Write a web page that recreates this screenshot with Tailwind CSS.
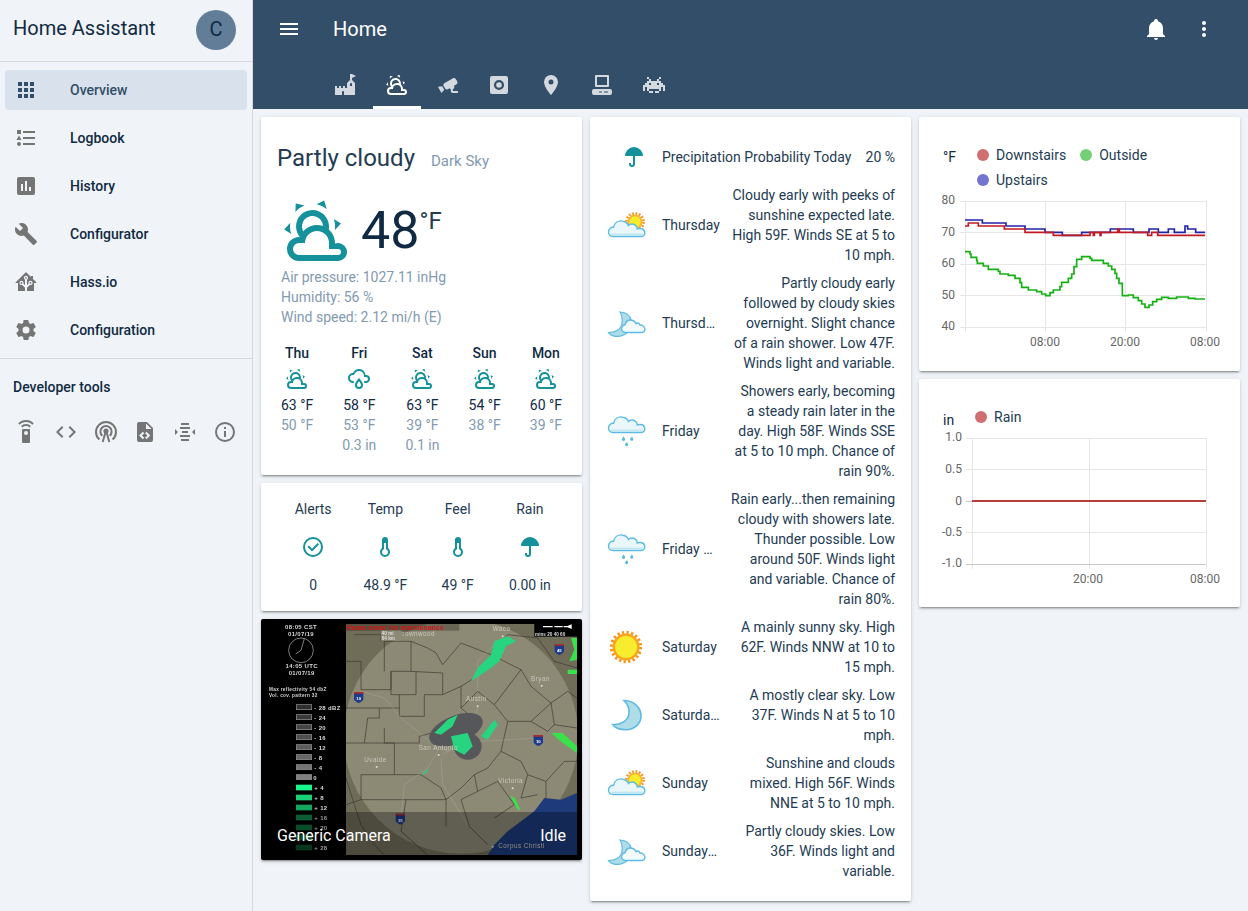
<!DOCTYPE html>
<html lang="en">
<head>
<meta charset="utf-8" />
<title>Home Assistant</title>
<script src="https://cdn.jsdelivr.net/npm/@tailwindcss/browser@4"></script>
</head>
<body class="h-screen overflow-hidden bg-[#f0f4f8] text-[#102a43] text-sm [font-family:Roboto,sans-serif]">

<!-- shared icons -->
<svg class="absolute w-0 h-0">
  <defs>
    <symbol id="partly" viewBox="0 0 24 24"><path d="M12.74,5.47C15.1,6.5 16.35,9.03 15.92,11.46C17.19,12.56 18,14.19 18,16V16.17C18.31,16.06 18.65,16 19,16A3,3 0 0,1 22,19A3,3 0 0,1 19,22H6A4,4 0 0,1 2,18A4,4 0 0,1 6,14H6.27C5,12.45 4.6,10.24 5.5,8.26C6.72,5.5 9.97,4.24 12.74,5.47M11.93,7.3C10.16,6.5 8.09,7.31 7.31,9.07C6.85,10.09 6.93,11.25 7.41,12.17C8.5,10.83 10.16,10 12,10C12.7,10 13.38,10.12 14,10.34C13.94,9.06 13.18,7.86 11.93,7.3M13.55,3.64C13,3.4 12.45,3.23 11.88,3.12L14.37,1.82L15.27,4.71C14.76,4.29 14.19,3.93 13.55,3.64M6.09,4.44C5.6,4.79 5.17,5.19 4.8,5.63L4.91,2.82L7.87,3.5C7.25,3.71 6.65,4.03 6.09,4.44M18,9.71C17.91,9.12 17.78,8.55 17.59,8L19.97,9.5L17.92,11.73C18.03,11.08 18.05,10.4 18,9.71M3.04,11.3C3.11,11.9 3.24,12.47 3.43,13L1.06,11.5L3.1,9.28C3,9.93 2.97,10.61 3.04,11.3M19,18H16V16A4,4 0 0,0 12,12A4,4 0 0,0 8,16H6A2,2 0 0,0 4,18A2,2 0 0,0 6,20H19A1,1 0 0,0 20,19A1,1 0 0,0 19,18Z"/></symbol>
    <symbol id="thermo" viewBox="0 0 24 24"><path d="M17,17A5,5 0 0,1 12,22A5,5 0 0,1 7,17C7,15.36 7.79,13.91 9,13V5A3,3 0 0,1 12,2A3,3 0 0,1 15,5V13C16.21,13.91 17,15.36 17,17M11,8V14.17C9.83,14.58 9,15.69 9,17A3,3 0 0,0 12,20A3,3 0 0,0 15,17C15,15.69 14.17,14.58 13,14.17V8H11Z"/></symbol>
    <symbol id="umbrella" viewBox="0 0 24 24"><path d="M12,2A9,9 0 0,1 21,11H13V19A3,3 0 0,1 10,22A3,3 0 0,1 7,19V18H9V19A1,1 0 0,0 10,20A1,1 0 0,0 11,19V11H3A9,9 0 0,1 12,2Z"/></symbol>
    <symbol id="cloud-shape" viewBox="0 0 40 40"><path d="M7 31.5C3.5 31.5 2.5 28.7 2.5 27C2.5 24 5 22 7.5 22.3C8.5 18 12 15.5 16 16C19 16.3 21.5 18 22.5 20.5C24.5 18.5 28 18.5 30 20.8C31 22 31.3 23 31.3 24C32 23.5 33 23.5 34 23.5C37 23.5 38.8 25.5 38.8 28C38.8 30 37 31.5 35 31.5Z" fill="#eaf7fa" stroke="#5cbae3" stroke-width="1.4"/><path d="M5 29.6H36.5" stroke="#bfe6f1" stroke-width="2"/></symbol>
    <symbol id="w-sun-cloud" viewBox="0 0 40 40">
      <circle cx="29" cy="17" r="8.6" fill="none" stroke="#f7931e" stroke-width="2.6" stroke-dasharray="1.7 1.7"/>
      <circle cx="29" cy="17" r="7.6" fill="#f9b233"/>
      <circle cx="29" cy="17" r="5.8" fill="#f7ec2d"/>
      <use href="#cloud-shape" width="40" height="40"/>
    </symbol>
    <symbol id="w-moon-cloud" viewBox="0 0 40 40">
      <path d="M14 9C20 9.5 24 12.5 25 17L17 24L22 28.5C20 31.5 15 34 9.5 33.3C6.5 33 3.5 31.3 2.5 29.5C9 29.8 15 26.5 16 20.5C16.6 15.5 16 12 14 9Z" fill="#aedde8" stroke="#5cbae3" stroke-width="1.2"/>
      <path d="M20 29.5C16.5 29.5 15.5 26.8 15.5 25.5C15.5 23 17.5 21.7 19 21.8C20 18.5 22.5 16.8 25 17C27.5 17.2 29.2 18.6 30 20.6C31.5 19.5 33.5 20 34 22C36.5 22 38.8 23.8 38.8 26.2C38.8 28 37.3 29.5 35.3 29.5Z" fill="#f4fbfc" stroke="#5cbae3" stroke-width="1.4"/>
    </symbol>
    <symbol id="w-rain" viewBox="0 0 40 40">
      <use href="#cloud-shape" width="40" height="40" y="-10"/>
      <path d="M17.5 25.5L19 27.5A1.7 1.7 0 1 1 16 27.5Z M26 25.5L27.2 27.7A1.6 1.6 0 1 1 24.3 27.5Z M21 31L22 33A1.6 1.6 0 1 1 19.2 33Z" fill="#5cbae3"/>
    </symbol>
    <symbol id="w-sun" viewBox="0 0 40 40">
      <circle cx="20" cy="20" r="14.6" fill="none" stroke="#f7931e" stroke-width="3.2" stroke-dasharray="2.3 2.29"/>
      <circle cx="20" cy="20" r="13.5" fill="#f9a61e"/>
      <circle cx="20" cy="20" r="11" fill="#f7ec2d"/>
    </symbol>
    <symbol id="w-moon" viewBox="0 0 40 40">
      <path d="M18 5.5C27 5.5 35 12 35 21C35 29 28 34.8 20 34.8C14 34.8 9 33 6.8 29.5C14 30 22 26 23 19C24 13 21 8.5 18 5.5Z" fill="#aedde8" stroke="#5cbae3" stroke-width="1.6"/>
    </symbol>
  </defs>
</svg>

<div class="flex h-full">
  <!-- sidebar -->
  <aside class="w-[253px] shrink-0 border-r border-[#d5d9de] flex flex-col">
    <div class="h-[62px] pl-[13px] pr-4 border-b border-[#d5d9de] flex items-center justify-between pb-[4px]">
      <span class="text-[20px]">Home Assistant</span>
      <span class="w-10 h-10 rounded-full bg-[#627d98] flex items-center justify-center text-[20px] mt-[2px]">C</span>
    </div>
    <nav class="pt-2 pb-2 flex flex-col gap-2 border-b border-[#d5d9de] font-medium">
      <a class="mx-[5px] h-10 rounded bg-[#d9e2ec] flex items-center pl-[9px] gap-8 text-[#334e68]">
        <svg class="w-6 h-6 fill-[#334e68]" viewBox="0 0 24 24"><path d="M16,20H20V16H16M16,14H20V10H16M10,8H14V4H10M16,8H20V4H16M10,14H14V10H10M4,14H8V10H4M4,20H8V16H4M10,20H14V16H10M4,8H8V4H4V8Z"/></svg>
        Overview
      </a>
      <a class="mx-[5px] h-10 flex items-center pl-[9px] gap-8">
        <svg class="w-6 h-6 fill-[#757575]" viewBox="0 0 24 24"><path d="M5,9.5L7.5,14H2.5L5,9.5M3,4H7V8H3V4M5,20A2,2 0 0,0 7,18A2,2 0 0,0 5,16A2,2 0 0,0 3,18A2,2 0 0,0 5,20M9,5V7H21V5H9M9,19H21V17H9V19M9,13H21V11H9V13Z"/></svg>
        Logbook
      </a>
      <a class="mx-[5px] h-10 flex items-center pl-[9px] gap-8">
        <svg class="w-6 h-6 fill-[#757575]" viewBox="0 0 24 24"><path d="M17,17H15V13H17M13,17H11V7H13M9,17H7V10H9M19,3H5C3.89,3 3,3.89 3,5V19A2,2 0 0,0 5,21H19A2,2 0 0,0 21,19V5C21,3.89 20.1,3 19,3Z"/></svg>
        History
      </a>
      <a class="mx-[5px] h-10 flex items-center pl-[9px] gap-8">
        <svg class="w-6 h-6 fill-[#757575]" viewBox="0 0 24 24"><path d="M22.7,19L13.6,9.9C14.5,7.6 14,4.9 12.1,3C10.1,1 7.1,0.6 4.7,1.7L9,6L6,9L1.6,4.7C0.4,7.1 0.9,10.1 2.9,12.1C4.8,14 7.5,14.5 9.8,13.6L18.9,22.7C19.3,23.1 19.9,23.1 20.3,22.7L22.6,20.4C23.1,20 23.1,19.3 22.7,19Z"/></svg>
        Configurator
      </a>
      <a class="mx-[5px] h-10 flex items-center pl-[9px] gap-8">
        <svg class="w-6 h-6 fill-[#757575]" viewBox="0 0 24 24"><path d="M21.8,13H20V21H13V17.67L15.79,14.88L16.5,15C17.66,15 18.6,14.06 18.6,12.9C18.6,11.74 17.66,10.8 16.5,10.8A2.1,2.1 0 0,0 14.4,12.9L14.5,13.61L13,15.13V9.65C13.66,9.29 14.1,8.6 14.1,7.8A2.1,2.1 0 0,0 12,5.7A2.1,2.1 0 0,0 9.9,7.8C9.9,8.6 10.34,9.29 11,9.65V15.13L9.5,13.61L9.6,12.9A2.1,2.1 0 0,0 7.5,10.8A2.1,2.1 0 0,0 5.4,12.9A2.1,2.1 0 0,0 7.5,15L8.21,14.88L11,17.67V21H4V13H2.25C1.83,13 1.42,13 1.42,12.79C1.43,12.57 1.85,12.15 2.28,11.72L11,3C11.33,2.67 11.67,2.33 12,2.33C12.33,2.33 12.67,2.67 13,3L17,7V6H19V9L21.78,11.78C22.18,12.18 22.59,12.59 22.6,12.8C22.6,13 22.2,13 21.8,13M7.5,12A0.9,0.9 0 0,1 8.4,12.9A0.9,0.9 0 0,1 7.5,13.8A0.9,0.9 0 0,1 6.6,12.9A0.9,0.9 0 0,1 7.5,12M16.5,12C17,12 17.4,12.4 17.4,12.9C17.4,13.4 17,13.8 16.5,13.8A0.9,0.9 0 0,1 15.6,12.9A0.9,0.9 0 0,1 16.5,12M12,6.9C12.5,6.9 12.9,7.3 12.9,7.8C12.9,8.3 12.5,8.7 12,8.7C11.5,8.7 11.1,8.3 11.1,7.8C11.1,7.3 11.5,6.9 12,6.9Z"/></svg>
        Hass.io
      </a>
      <a class="mx-[5px] h-10 flex items-center pl-[9px] gap-8">
        <svg class="w-6 h-6 fill-[#757575]" viewBox="0 0 24 24"><path d="M12,15.5A3.5,3.5 0 0,1 8.5,12A3.5,3.5 0 0,1 12,8.5A3.5,3.5 0 0,1 15.5,12A3.5,3.5 0 0,1 12,15.5M19.43,12.97C19.47,12.65 19.5,12.33 19.5,12C19.5,11.67 19.47,11.34 19.43,11L21.54,9.37C21.73,9.22 21.78,8.95 21.66,8.73L19.66,5.27C19.54,5.05 19.27,4.96 19.05,5.05L16.56,6.05C16.04,5.66 15.5,5.32 14.87,5.07L14.5,2.42C14.46,2.18 14.25,2 14,2H10C9.75,2 9.54,2.18 9.5,2.42L9.13,5.07C8.5,5.32 7.96,5.66 7.44,6.05L4.95,5.05C4.73,4.96 4.46,5.05 4.34,5.27L2.34,8.73C2.21,8.95 2.27,9.22 2.46,9.37L4.57,11C4.53,11.34 4.5,11.67 4.5,12C4.5,12.33 4.53,12.65 4.57,12.97L2.46,14.63C2.27,14.78 2.21,15.05 2.34,15.27L4.34,18.73C4.46,18.95 4.73,19.03 4.95,18.95L7.44,17.94C7.96,18.34 8.5,18.68 9.13,18.93L9.5,21.58C9.54,21.82 9.75,22 10,22H14C14.25,22 14.46,21.82 14.5,21.58L14.87,18.93C15.5,18.67 16.04,18.34 16.56,17.94L19.05,18.95C19.27,19.03 19.54,18.95 19.66,18.73L21.66,15.27C21.78,15.05 21.73,14.78 21.54,14.63L19.43,12.97Z"/></svg>
        Configuration
      </a>
    </nav>
    <div class="pl-[13px] pt-[18px] font-medium leading-5">Developer tools</div>
    <div class="pl-[14px] mt-[23px] flex gap-[15.8px]">
      <svg class="w-6 h-6 fill-[#757575]" viewBox="0 0 24 24"><path d="M12,0C8.96,0 6.21,1.23 4.22,3.22L5.63,4.63C7.26,3 9.5,2 12,2C14.5,2 16.74,3 18.36,4.64L19.77,3.23C17.79,1.23 15.04,0 12,0M7.05,6.05L8.46,7.46C9.37,6.56 10.62,6 12,6C13.38,6 14.63,6.56 15.54,7.46L16.95,6.05C15.68,4.78 13.93,4 12,4C10.07,4 8.32,4.78 7.05,6.05M12,15A2,2 0 0,1 10,13A2,2 0 0,1 12,11A2,2 0 0,1 14,13A2,2 0 0,1 12,15M15,9H9A1,1 0 0,0 8,10V22A1,1 0 0,0 9,23H15A1,1 0 0,0 16,22V10A1,1 0 0,0 15,9Z"/></svg>
      <svg class="w-6 h-6 fill-[#757575]" viewBox="0 0 24 24"><path d="M14.6,16.6L19.2,12L14.6,7.4L16,6L22,12L16,18L14.6,16.6M9.4,16.6L4.8,12L9.4,7.4L8,6L2,12L8,18L9.4,16.6Z"/></svg>
      <svg class="w-6 h-6 fill-none stroke-[#757575] stroke-2" viewBox="0 0 24 24"><path d="M5.4,19.5A10,10 0 1 1 18.6,19.5"/><path d="M8.3,15.8A5.6,5.6 0 1 1 15.7,15.8"/><circle cx="12" cy="11" r="1.6" class="fill-[#757575]"/><path d="M11.5,12L8.7,22M12.5,12L15.3,22"/></svg>
      <svg class="w-6 h-6 fill-[#757575]" viewBox="0 0 24 24"><path d="M13,9H18.5L13,3.5V9M6,2H14L20,8V20A2,2 0 0,1 18,22H6C4.89,22 4,21.1 4,20V4C4,2.89 4.89,2 6,2M6.12,15.5L9.86,19.24L11.28,17.83L8.95,15.5L11.28,13.17L9.86,11.76L6.12,15.5M17.28,15.5L13.54,11.76L12.12,13.17L14.45,15.5L12.12,17.83L13.54,19.24L17.28,15.5Z"/></svg>
      <svg class="w-6 h-6 fill-[#757575]" viewBox="0 0 24 24"><path d="M8,3H16V5H8ZM7,7H17V9H7ZM9,11H15V13H9ZM7,15H17V17H7ZM8,19H16V21H8ZM2,9V15L5,12ZM22,9V15L19,12Z"/></svg>
      <svg class="w-6 h-6 fill-[#757575]" viewBox="0 0 24 24"><path d="M11,9H13V7H11M12,20C7.59,20 4,16.41 4,12C4,7.59 7.59,4 12,4C16.41,4 20,7.59 20,12C20,16.41 16.41,20 12,20M12,2A10,10 0 0,0 2,12A10,10 0 0,0 12,22A10,10 0 0,0 22,12A10,10 0 0,0 12,2M11,17H13V11H11V17Z"/></svg>
    </div>
  </aside>

  <main class="flex-1 min-w-0">
    <!-- toolbar -->
    <header class="h-[109px] bg-[#334e68] text-white">
      <div class="h-[58px] flex items-center pl-[24px] pr-[32px]">
        <svg class="w-6 h-6 fill-white" viewBox="0 0 24 24"><path d="M3,6H21V8H3V6M3,11H21V13H3V11M3,16H21V18H3V16Z"/></svg>
        <span class="ml-[32px] text-[20px] flex-1">Home</span>
        <svg class="w-6 h-6 fill-white" viewBox="0 0 24 24"><path d="M21,19V20H3V19L5,17V11C5,7.9 7.03,5.17 10,4.29C10,4.19 10,4.1 10,4A2,2 0 0,1 12,2A2,2 0 0,1 14,4C14,4.1 14,4.19 14,4.29C16.97,5.17 19,7.9 19,11V17L21,19M14,21A2,2 0 0,1 12,23A2,2 0 0,1 10,21"/></svg>
        <svg class="w-6 h-6 fill-white ml-6" viewBox="0 0 24 24"><path d="M12,16A2,2 0 0,1 14,18A2,2 0 0,1 12,20A2,2 0 0,1 10,18A2,2 0 0,1 12,16M12,10A2,2 0 0,1 14,12A2,2 0 0,1 12,14A2,2 0 0,1 10,12A2,2 0 0,1 12,10M12,4A2,2 0 0,1 14,6A2,2 0 0,1 12,8A2,2 0 0,1 10,6A2,2 0 0,1 12,4Z"/></svg>
      </div>
      <div class="flex pl-[66.5px] fill-[#d3d9df]">
        <div class="w-[51.4px] pt-[15px] flex justify-center"><svg class="w-6 h-6" viewBox="0 0 24 24"><path d="M2,13H4V15H6V13H8V15H10V13H12V15H14V10L17,7V1H19L23,3L19,5V7L22,10V22H11V19A1,1 0 0,0 10,18A1,1 0 0,0 9,19V22H2V13M18,10C17.45,10 17,10.54 17,11.2V13H19V11.2C19,10.54 18.55,10 18,10Z"/></svg></div>
        <div class="w-[51.4px] pt-[15px] flex flex-col items-center fill-white">
          <svg class="w-6 h-6"><use href="#partly"/></svg>
          <div class="w-12 h-[3px] bg-white mt-[9px]"></div>
        </div>
        <div class="w-[51.4px] pt-[15px] flex justify-center"><svg class="w-6 h-6" viewBox="0 0 24 24"><path d="M18.15,4.94C17.77,4.91 17.37,5 17,5.2L8.35,10.2C7.39,10.76 7.07,12 7.62,12.94L9.12,15.53C9.67,16.5 10.89,16.82 11.85,16.27L13.65,15.23C13.92,15.69 14.32,16.06 14.81,16.27V18.04C14.81,19.13 15.7,20 16.81,20H22V18.04H16.81V16.27C17.72,15.87 18.31,14.97 18.31,14C18.31,13.54 18.19,13.11 17.97,12.73L20.5,11.27C21.47,10.71 21.8,9.5 21.24,8.53L19.74,5.94C19.4,5.34 18.79,5 18.15,4.94M6.22,13.17L2,13.87L2.75,15.17L4.75,18.63L5.5,19.93L8.22,16.63L6.22,13.17Z"/></svg></div>
        <div class="w-[51.4px] pt-[15px] flex justify-center"><svg class="w-6 h-6" viewBox="0 0 24 24"><path fill-rule="evenodd" d="M5,3H19A2,2 0 0,1 21,5V19A2,2 0 0,1 19,21H5A2,2 0 0,1 3,19V5A2,2 0 0,1 5,3ZM12,7A5,5 0 1,0 12,17A5,5 0 1,0 12,7ZM12,9.2A2.8,2.8 0 1,1 12,14.8A2.8,2.8 0 1,1 12,9.2Z"/></svg></div>
        <div class="w-[51.4px] pt-[15px] flex justify-center"><svg class="w-6 h-6" viewBox="0 0 24 24"><path d="M12,11.5A2.5,2.5 0 0,1 9.5,9A2.5,2.5 0 0,1 12,6.5A2.5,2.5 0 0,1 14.5,9A2.5,2.5 0 0,1 12,11.5M12,2A7,7 0 0,0 5,9C5,14.25 12,22 12,22C12,22 19,14.25 19,9A7,7 0 0,0 12,2Z"/></svg></div>
        <div class="w-[51.4px] pt-[15px] flex justify-center"><svg class="w-6 h-6" viewBox="0 0 24 24"><path fill-rule="evenodd" d="M6,2H18A1,1 0 0,1 19,3V13A1,1 0 0,1 18,14H6A1,1 0 0,1 5,13V3A1,1 0 0,1 6,2ZM7,4V12H17V4ZM4,16H20A2,2 0 0,1 22,18V20A2,2 0 0,1 20,22H4A2,2 0 0,1 2,20V18A2,2 0 0,1 4,16ZM9,18.5V19.5H12V18.5ZM14,18.5V19.5H18V18.5Z"/></svg></div>
        <div class="w-[51.4px] pt-[15px] flex justify-center"><svg class="w-6 h-6" viewBox="0 0 24 24"><path d="M7,6H5V4H7V6M17,6H19V4H17V6M23,12V18H21V14H19V18H17V16H7V18H5V14H3V18H1V12H3V10H5V8H7V6H9V8H15V6H17V8H19V10H21V12H23M15,10V12H17V10H15M7,12H9V10H7V12M11,18H7V20H11V18M17,18H13V20H17V18Z"/></svg></div>
      </div>
    </header>

    <div class="flex gap-2 p-2 items-start">
      <!-- column 1 -->
      <div class="w-[321px] flex flex-col gap-2">
        <section class="bg-white rounded-[2px] shadow-[0_2px_2px_0_rgba(0,0,0,.14),0_1px_5px_0_rgba(0,0,0,.12),0_3px_1px_-2px_rgba(0,0,0,.2)] pt-[25px] pb-5">
          <div class="pl-4 flex items-baseline leading-8">
            <span class="text-2xl text-[#243b53]">Partly cloudy</span>
            <span class="ml-4 text-[15px] text-[#829ab1]">Dark Sky</span>
          </div>
          <div class="mt-[18px] pl-5 flex h-[72px] items-center">
            <svg class="w-[72px] h-[72px] fill-[#14919b]"><use href="#partly"/></svg>
            <span class="ml-2 text-[52px] leading-none">48</span>
            <span class="self-start mt-[10px] text-2xl leading-8 text-[#243b53]">°F</span>
          </div>
          <div class="pl-5 leading-5 text-[#829ab1]">
            <div>Air pressure: 1027.11 inHg</div>
            <div>Humidity: 56 %</div>
            <div>Wind speed: 2.12 mi/h (E)</div>
          </div>
          <div class="mt-4 px-5 flex justify-between text-center leading-5">
            <div>
              <div class="font-medium">Thu</div>
              <svg class="w-6 h-6 my-1 mx-auto fill-[#14919b]"><use href="#partly"/></svg>
              <div>63 °F</div>
              <div class="text-[#829ab1]">50 °F</div>
            </div>
            <div>
              <div class="font-medium">Fri</div>
              <svg class="w-6 h-6 my-1 mx-auto fill-[#14919b]" viewBox="0 0 24 24"><path d="M6,14.03A1,1 0 0,1 7,15.03C7,15.58 6.55,16.03 6,16.03C3.24,16.03 1,13.79 1,11.03C1,8.27 3.24,6.03 6,6.03C7,3.68 9.3,2.03 12,2.03C15.43,2.03 18.24,4.69 18.5,8.06L19,8.03A4,4 0 0,1 23,12.03C23,14.24 21.21,16.03 19,16.03H18C17.45,16.03 17,15.58 17,15.03C17,14.47 17.45,14.03 18,14.03H19A2,2 0 0,0 21,12.03A2,2 0 0,0 19,10.03H17V9.03C17,6.27 14.76,4.03 12,4.03C9.5,4.03 7.45,5.84 7.06,8.21C6.73,8.09 6.37,8.03 6,8.03A3,3 0 0,0 3,11.03A3,3 0 0,0 6,14.03M12,14.15C12.18,14.39 12.37,14.66 12.56,14.94C13,15.56 14,17.03 14,18C14,19.11 13.1,20 12,20A2,2 0 0,1 10,18C10,17.03 11,15.56 11.44,14.94C11.63,14.66 11.82,14.4 12,14.15M12,11.03L11.5,11.59C11.5,11.59 10.65,12.55 9.79,13.81C8.93,15.06 8,16.56 8,18A4,4 0 0,0 12,22A4,4 0 0,0 16,18C16,16.56 15.07,15.06 14.21,13.81C13.35,12.55 12.5,11.59 12.5,11.59L12,11.03Z"/></svg>
              <div>58 °F</div>
              <div class="text-[#829ab1]">53 °F</div>
              <div class="text-[#829ab1]">0.3 in</div>
            </div>
            <div>
              <div class="font-medium">Sat</div>
              <svg class="w-6 h-6 my-1 mx-auto fill-[#14919b]"><use href="#partly"/></svg>
              <div>63 °F</div>
              <div class="text-[#829ab1]">39 °F</div>
              <div class="text-[#829ab1]">0.1 in</div>
            </div>
            <div>
              <div class="font-medium">Sun</div>
              <svg class="w-6 h-6 my-1 mx-auto fill-[#14919b]"><use href="#partly"/></svg>
              <div>54 °F</div>
              <div class="text-[#829ab1]">38 °F</div>
            </div>
            <div>
              <div class="font-medium">Mon</div>
              <svg class="w-6 h-6 my-1 mx-auto fill-[#14919b]"><use href="#partly"/></svg>
              <div>60 °F</div>
              <div class="text-[#829ab1]">39 °F</div>
            </div>
          </div>
        </section>

        <section class="bg-white rounded-[2px] shadow-[0_2px_2px_0_rgba(0,0,0,.14),0_1px_5px_0_rgba(0,0,0,.12),0_3px_1px_-2px_rgba(0,0,0,.2)] px-4 py-4 grid grid-cols-4 text-center leading-5 text-[#243b53]">
          <div>
            <div>Alerts</div>
            <svg class="w-6 h-6 my-4 mx-auto fill-[#14919b]" viewBox="0 0 24 24"><path d="M12,2A10,10 0 0,1 22,12A10,10 0 0,1 12,22A10,10 0 0,1 2,12A10,10 0 0,1 12,2M12,4A8,8 0 0,0 4,12A8,8 0 0,0 12,20A8,8 0 0,0 20,12A8,8 0 0,0 12,4M11,16.5L6.5,12L7.91,10.59L11,13.67L16.59,8.09L18,9.5L11,16.5Z"/></svg>
            <div>0</div>
          </div>
          <div>
            <div>Temp</div>
            <svg class="w-6 h-6 my-4 mx-auto fill-[#14919b]"><use href="#thermo"/></svg>
            <div>48.9 °F</div>
          </div>
          <div>
            <div>Feel</div>
            <svg class="w-6 h-6 my-4 mx-auto fill-[#14919b]"><use href="#thermo"/></svg>
            <div>49 °F</div>
          </div>
          <div>
            <div>Rain</div>
            <svg class="w-6 h-6 my-4 mx-auto fill-[#14919b]"><use href="#umbrella"/></svg>
            <div>0.00 in</div>
          </div>
        </section>

        <!-- radar camera -->
        <section class="relative h-[241px] bg-black rounded-[2px] overflow-hidden shadow-[0_2px_2px_0_rgba(0,0,0,.14),0_1px_5px_0_rgba(0,0,0,.12),0_3px_1px_-2px_rgba(0,0,0,.2)]">
          <svg class="block w-[321px] h-[241px] blur-[0.4px]" viewBox="0 3 963 723">
            <rect x="255" y="18" width="693" height="693" fill="#6f6c58"/>
            <clipPath id="mapclip"><rect x="255" y="18" width="693" height="693"/></clipPath>
            <g clip-path="url(#mapclip)">
              <circle cx="600" cy="355" r="352" fill="#8c8974"/>
              <path d="M948 525L900 545L850 540L820 580L780 610L740 640L700 680L680 711H948Z" fill="#1e3a7a"/>
              <g fill="none" stroke="#3b3a30" stroke-width="2">
                <path d="M255,130H300V215H390V160H450V70L500,90L525,105L545,140L600,75L690,110L780,155L810,205"/>
                <path d="M370,70V160M370,70H450M280,50H360V70"/>
                <path d="M450,160L545,165V230M390,160V230H465V160"/>
                <path d="M415,230V295H490V230M490,230H545L600,205L640,180"/>
                <path d="M255,270H355V300H320L310,375H255"/>
                <path d="M355,270H415M370,330V375H475V355L530,340"/>
                <path d="M310,375H400V470H300V545L255,560"/>
                <path d="M400,470H480L540,510L555,545V625"/>
                <path d="M300,545H435L420,640M435,545H555"/>
                <path d="M555,545L600,510L640,470L680,450L720,400L780,430L800,470L855,490L910,430L948,430"/>
                <path d="M640,470L650,520L600,545L625,625L680,680"/>
                <path d="M650,520L710,490L760,560L700,600M800,470L780,540L830,530"/>
                <path d="M720,400L740,310L810,310L860,340L880,320L948,330"/>
                <path d="M740,310L700,260L780,155M810,205L870,255L880,320M810,310L870,255"/>
                <path d="M870,255L920,220L948,240M830,60L880,130L948,150M690,110L740,50L830,60"/>
                <path d="M600,270L650,220L700,260M600,205V270L660,320M855,490L855,540"/>
                <path d="M255,480L280,560L300,620L340,680L370,711M420,640L500,711"/>
              </g>
              <g fill="none" stroke="#a6a59a" stroke-width="1.5">
                <path d="M300,220L370,240L420,300L500,365L560,400L660,370L830,360"/>
                <path d="M530,400L500,450L430,500L420,600M540,420L545,500L620,620"/>
                <path d="M650,220V130L720,60M650,270L620,360L545,410"/>
              </g>
              <!-- echoes -->
              <g fill="#56575a">
                <ellipse cx="585" cy="335" rx="85" ry="42" transform="rotate(-22 585 335)"/>
                <ellipse cx="620" cy="385" rx="42" ry="40"/>
              </g>
              <g fill="#27d47f">
                <path d="M630,190L650,150L690,110L700,70L740,55L765,70L735,85L715,130L690,150L660,170Z"/>
                <path d="M520,345L560,305L590,290L575,325L540,350Z M570,355L620,345L635,385L610,410L580,395Z M660,355L700,305L710,320L680,365Z M480,470L505,450L495,465Z"/>
              </g>
              <g fill="#39e14a">
                <path d="M930,60H948V125L925,130L940,95Z M920,155H948V168H920Z M870,345L905,345L948,385V405L905,375Z M748,535L762,540L778,575L770,575Z"/>
              </g>
              <g fill="#c9c9bd" font-family="Liberation Sans, sans-serif" font-size="19" letter-spacing="1.4">
                <text x="410" y="54">Brownwood</text>
                <text x="695" y="39">Waco</text>
                <text x="810" y="188">Bryan</text>
                <text x="615" y="250">Austin</text>
                <text x="473" y="397">San Antonio</text>
                <text x="310" y="431">Uvalde</text>
                <text x="712" y="496">Victoria</text>
                <text x="712" y="691">Corpus Christi</text>
              </g>
              <g fill="#ddd">
                <circle cx="725" cy="55" r="3"/><circle cx="842" cy="203" r="3"/><circle cx="650" cy="265" r="3"/><circle cx="533" cy="411" r="3"/><circle cx="347" cy="447" r="3"/><circle cx="755" cy="511" r="3"/><circle cx="695" cy="686" r="3"/>
              </g>
              <g font-family="Liberation Sans, sans-serif" font-size="13" font-weight="700" fill="#fff" text-anchor="middle">
                <path d="M279 222H307V245Q300 253 293 255Q286 253 279 245Z" fill="#1e3a8a"/><path d="M279 222H307V227H279Z" fill="#b02a2a"/><text x="293" y="246">10</text>
                <path d="M881 78H909V101Q902 109 895 111Q888 109 881 101Z" fill="#1e3a8a"/><path d="M881 78H909V83H881Z" fill="#b02a2a"/><text x="895" y="102">45</text>
                <path d="M818 351H846V374Q839 382 832 384Q825 382 818 374Z" fill="#1e3a8a"/><path d="M818 351H846V356H818Z" fill="#b02a2a"/><text x="832" y="375">10</text>
                <path d="M404 587H432V610Q425 618 418 620Q411 618 404 610Z" fill="#1e3a8a"/><path d="M404 587H432V592H404Z" fill="#b02a2a"/><text x="418" y="611">35</text>
              </g>
              <rect x="820" y="18" width="128" height="38" fill="#000"/>
              <path d="M846,26H875M880,26H905M908,26H920L930,22V30L920,26" stroke="#fff" stroke-width="4" fill="#fff"/>
              <text x="822" y="53" fill="#ddd" font-family="Liberation Sans, sans-serif" font-size="14" font-weight="700">mins 20  40  60</text>
              <rect x="360" y="36" width="62" height="32" fill="#8c8974"/>
              <text x="362" y="50" fill="#ddd" font-family="Liberation Sans, sans-serif" font-size="14" font-weight="700">40  mi</text>
              <text x="362" y="65" fill="#ddd" font-family="Liberation Sans, sans-serif" font-size="14" font-weight="700">64  km</text>
              <rect x="255" y="18" width="340" height="20" fill="#000" opacity=".25"/>
              <text x="257" y="35" fill="#e01010" font-family="Liberation Sans, sans-serif" font-size="19" font-weight="700" letter-spacing="1.2">Radar down for maintenance</text>
            </g>
            <!-- left panel -->
            <g fill="#d8d8d8" font-family="Liberation Sans, sans-serif" font-size="18" font-weight="700" letter-spacing="1" text-anchor="middle">
              <text x="120" y="33">08:05 CST</text>
              <text x="120" y="54">01/07/19</text>
              <text x="122" y="151">14:05 UTC</text>
              <text x="122" y="172">01/07/19</text>
            </g>
            <circle cx="120" cy="97" r="37" fill="none" stroke="#bbb" stroke-width="2"/>
            <path d="M120,97L104,108M120,97L130,62" stroke="#bbb" stroke-width="2"/>
            <g fill="#d8d8d8" font-family="Liberation Sans, sans-serif" font-size="14" font-weight="700" letter-spacing="1">
              <text x="24" y="219">Max reflectivity  54  dbZ</text>
              <text x="24" y="237">Vol. cov. pattern  32</text>
            </g>
            <g stroke="#999" stroke-width="2">
              <rect x="106" y="260" width="46" height="15" fill="#303030"/>
              <rect x="106" y="290" width="46" height="15" fill="#3a3a3a"/>
              <rect x="106" y="320" width="46" height="15" fill="#454545"/>
              <rect x="106" y="350" width="46" height="15" fill="#505050"/>
              <rect x="106" y="380" width="46" height="15" fill="#5c5c5c"/>
              <rect x="106" y="410" width="46" height="15" fill="#686868"/>
              <rect x="106" y="440" width="46" height="15" fill="#747474"/>
              <rect x="106" y="470" width="46" height="15" fill="#808080"/>
            </g>
            <rect x="105" y="500" width="48" height="17" fill="#18f58c"/>
            <rect x="105" y="530" width="48" height="17" fill="#18d078"/>
            <rect x="105" y="560" width="48" height="17" fill="#14a85e"/>
            <rect x="105" y="590" width="48" height="17" fill="#10864a"/>
            <rect x="105" y="620" width="48" height="17" fill="#0e703e"/>
            <rect x="105" y="650" width="48" height="17" fill="#0c6034"/>
            <rect x="105" y="680" width="48" height="17" fill="#0a5029"/>
            <g fill="#d8d8d8" font-family="Liberation Sans, sans-serif" font-size="18" font-weight="700" letter-spacing="1">
              <text x="160" y="275">- 28  dBZ</text><text x="160" y="305">- 24</text><text x="160" y="335">- 20</text><text x="160" y="365">- 16</text><text x="160" y="395">- 12</text><text x="160" y="425">- 8</text><text x="160" y="455">- 4</text><text x="157" y="485">0</text>
              <text x="160" y="515">+ 4</text><text x="160" y="545">+ 8</text><text x="160" y="575">+ 12</text><text x="160" y="605">+ 16</text><text x="160" y="635">+ 20</text><text x="160" y="695">+ 28</text>
            </g>
          </svg>
          <div class="absolute left-0 right-0 bottom-0 h-12 bg-black/30 flex items-center justify-between px-4 text-white text-base">
            <span>Generic Camera</span>
            <span>Idle</span>
          </div>
        </section>
      </div>

      <!-- column 2: forecast -->
      <section class="w-[321px] bg-white rounded-[2px] shadow-[0_2px_2px_0_rgba(0,0,0,.14),0_1px_5px_0_rgba(0,0,0,.12),0_3px_1px_-2px_rgba(0,0,0,.2)] px-4 py-5 flex flex-col gap-2 leading-5 text-[#243b53]">
        <div class="h-10 flex items-center">
          <svg class="w-10 h-6 shrink-0 fill-[#14919b]"><use href="#umbrella" x="8"/></svg>
          <span class="ml-4 flex-1">Precipitation Probability Today</span>
          <span>20 %</span>
        </div>
        <div class="flex items-center">
          <svg class="w-10 h-10 shrink-0"><use href="#w-sun-cloud"/></svg>
          <span class="ml-4 w-[60px] shrink-0 truncate">Thursday</span>
          <span class="flex-1 text-right">Cloudy early with peeks of<br>sunshine expected late.<br>High 59F. Winds SE at 5 to<br>10 mph.</span>
        </div>
        <div class="flex items-center">
          <svg class="w-10 h-10 shrink-0"><use href="#w-moon-cloud"/></svg>
          <span class="ml-4 w-[54px] shrink-0 truncate">Thursday Night</span>
          <span class="flex-1 text-right">Partly cloudy early<br>followed by cloudy skies<br>overnight. Slight chance<br>of a rain shower. Low 47F.<br>Winds light and variable.</span>
        </div>
        <div class="flex items-center">
          <svg class="w-10 h-10 shrink-0"><use href="#w-rain"/></svg>
          <span class="ml-4 w-[54px] shrink-0 truncate">Friday</span>
          <span class="flex-1 text-right">Showers early, becoming<br>a steady rain later in the<br>day. High 58F. Winds SSE<br>at 5 to 10 mph. Chance of<br>rain 90%.</span>
        </div>
        <div class="flex items-center">
          <svg class="w-10 h-10 shrink-0"><use href="#w-rain"/></svg>
          <span class="ml-4 w-[52px] shrink-0 truncate">Friday Night</span>
          <span class="flex-1 text-right">Rain early...then remaining<br>cloudy with showers late.<br>Thunder possible. Low<br>around 50F. Winds light<br>and variable. Chance of<br>rain 80%.</span>
        </div>
        <div class="flex items-center">
          <svg class="w-10 h-10 shrink-0"><use href="#w-sun"/></svg>
          <span class="ml-4 w-[58px] shrink-0 truncate">Saturday</span>
          <span class="flex-1 text-right">A mainly sunny sky. High<br>62F. Winds NNW at 10 to<br>15 mph.</span>
        </div>
        <div class="flex items-center">
          <svg class="w-10 h-10 shrink-0"><use href="#w-moon"/></svg>
          <span class="ml-4 w-[58px] shrink-0 truncate">Saturday Night</span>
          <span class="flex-1 text-right">A mostly clear sky. Low<br>37F. Winds N at 5 to 10<br>mph.</span>
        </div>
        <div class="flex items-center">
          <svg class="w-10 h-10 shrink-0"><use href="#w-sun-cloud"/></svg>
          <span class="ml-4 w-[58px] shrink-0 truncate">Sunday</span>
          <span class="flex-1 text-right">Sunshine and clouds<br>mixed. High 56F. Winds<br>NNE at 5 to 10 mph.</span>
        </div>
        <div class="flex items-center">
          <svg class="w-10 h-10 shrink-0"><use href="#w-moon-cloud"/></svg>
          <span class="ml-4 w-[58px] shrink-0 truncate">Sunday Night</span>
          <span class="flex-1 text-right">Partly cloudy skies. Low<br>36F. Winds light and<br>variable.</span>
        </div>
      </section>

      <!-- column 3: charts -->
      <div class="w-[321px] flex flex-col gap-2">
        <section class="h-[254px] bg-white rounded-[2px] shadow-[0_2px_2px_0_rgba(0,0,0,.14),0_1px_5px_0_rgba(0,0,0,.12),0_3px_1px_-2px_rgba(0,0,0,.2)]">
          <div class="h-[74px] pl-6 pt-[25px] flex">
            <span class="w-[34px] mt-[5px] leading-5">°F</span>
            <div class="w-[190px] flex flex-wrap gap-x-[14px] text-[#243b53]">
              <span class="h-[25px] flex items-center gap-[7px]"><i class="w-3 h-3 rounded-full bg-[#cf6f6f]"></i>Downstairs</span>
              <span class="h-[25px] flex items-center gap-[7px]"><i class="w-3 h-3 rounded-full bg-[#74d074]"></i>Outside</span>
              <span class="h-[25px] flex items-center gap-[7px]"><i class="w-3 h-3 rounded-full bg-[#7373d0]"></i>Upstairs</span>
            </div>
          </div>
          <svg class="block w-[321px] h-[180px]" viewBox="919 191 321 180">
            <g stroke="#e6e6e6" fill="none">
              <path d="M960 201.5H1206M960 232.5H1206M960 264.5H1206M960 295.5H1206M960 327.5H1206"/>
              <path d="M965.5 201V332M1045.5 201V332M1125.5 201V332M1206.5 201V332"/>
            </g>
            <g fill="#666" font-size="12" text-anchor="end">
              <text x="955" y="204">80</text><text x="955" y="236">70</text><text x="955" y="267">60</text><text x="955" y="299">50</text><text x="955" y="330">40</text>
            </g>
            <g fill="#666" font-size="12" text-anchor="middle">
              <text x="1045" y="346">08:00</text><text x="1125" y="346">20:00</text><text x="1205" y="346">08:00</text>
            </g>
            <g transform="translate(925 130) scale(.33333)" fill="none" stroke-width="5">
              <path stroke="#2222aa" d="M120,270H172V279H243V288H300V297H360V307H412V316H470V307H556V297H625V307H672V297H700V307H730V297H748V307H780V288H788V297H812V307H840"/>
              <path stroke="#c21a22" d="M120,288H130V279H160V288H238V297H300V307H385V316H495V307H505V316H508V307H525V316H528V307H578V297H583V307H668V316H680V307H698V316H840"/>
              <path stroke="#14b014" d="M120,365H135V372H138V382H155V392H157V400H175V408H190V418H220V424H225V432H250V436H270V445H285V458H290V472H310V480H335V485H350V492H362V497H375V488H385V480H405V470H410V457H430V445H440V432H447V410H455V388H470V380H495V385H500V391H535V400H550V408H560V418H570V430H575V445H582V460H592V497H610V495H625V503H640V512H650V522H660V532H672V525H683V515H695V508H710V502H730V505H755V501H790V505H810V507H840"/>
            </g>
          </svg>
        </section>

        <section class="h-[228px] bg-white rounded-[2px] shadow-[0_2px_2px_0_rgba(0,0,0,.14),0_1px_5px_0_rgba(0,0,0,.12),0_3px_1px_-2px_rgba(0,0,0,.2)]">
          <div class="h-[49px] pl-6 pt-[25px] flex">
            <span class="w-[32px] mt-[6px] leading-5">in</span>
            <span class="h-[25px] flex items-center gap-[7px] text-[#243b53]"><i class="w-3 h-3 rounded-full bg-[#cf6f6f]"></i>Rain</span>
          </div>
          <svg class="block w-[321px] h-[179px]" viewBox="919 428 321 179">
            <g stroke="#e6e6e6" fill="none">
              <path d="M966 438.5H1206M966 469.5H1206M966 532.5H1206"/>
              <path d="M972.5 438V569M1089.5 438V569M1206.5 438V569"/>
            </g>
            <path d="M966 501.5H1206M966 564.5H1206" stroke="#c8c8c8" fill="none"/>
            <g fill="#666" font-size="12" text-anchor="end">
              <text x="962" y="441">1.0</text><text x="962" y="473">0.5</text><text x="962" y="505">0</text><text x="962" y="536">-0.5</text><text x="962" y="567">-1.0</text>
            </g>
            <g fill="#666" font-size="12" text-anchor="middle">
              <text x="1088" y="583">20:00</text><text x="1205" y="583">08:00</text>
            </g>
            <path d="M972 501H1206" stroke="#b83c3c" stroke-width="2"/>
          </svg>
        </section>
      </div>
    </div>
  </main>
</div>
</body>
</html>
